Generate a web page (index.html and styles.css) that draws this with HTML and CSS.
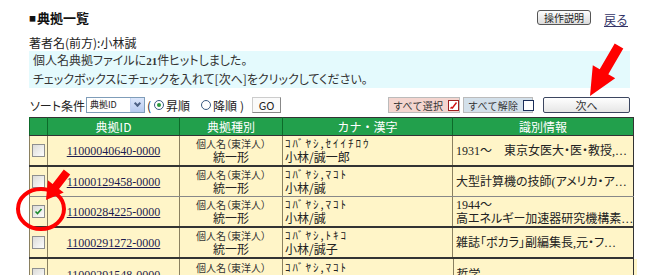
FILE: index.html
```html
<!DOCTYPE html>
<html lang="ja">
<head>
    <meta charset="UTF-8">
    <title>典拠一覧</title>
    <link rel="stylesheet" href="styles.css">
</head>
<body>
    <div class="page">
        <!-- Title bar -->
        <div class="top">
            <h1 class="title"><span class="sq">■</span>典拠一覧</h1>
            <div class="top-links">
                <button class="btn-help">操作説明</button>
                <a href="#" class="back">戻る</a>
            </div>
        </div>

        <p class="author">著者名(前方):小林誠</p>

        <div class="message">
            個人名典拠ファイルに<b class="num">21</b>件ヒットしました。<br>
            チェックボックスにチェックを入れて[次へ]をクリックしてください。
        </div>

        <!-- Sort + actions -->
        <div class="toolbar">
            <div class="sort">
                <span class="lbl">ソート条件</span>
                <span class="select"><span class="select-text">典拠ID</span><span class="select-btn"></span></span>
                <span class="paren">(</span>
                <span class="radio on"></span><span class="rlbl">昇順</span>
                <span class="radio"></span><span class="rlbl">降順</span>
                <span class="paren">)</span>
                <button class="btn-go">GO</button>
            </div>
            <div class="actions">
                <button class="btn-all">すべて選択<span class="box red"><svg width="9" height="9" viewBox="0 0 9 9"><path d="M1.5 7.5 L3 6 M3 7.5 L7.5 1.5" stroke="#d01010" stroke-width="1.4" fill="none"/></svg></span></button>
                <button class="btn-none">すべて解除<span class="box blue"></span></button>
                <button class="btn-next">次へ</button>
            </div>
        </div>

        <!-- Result table -->
        <table class="results">
            <thead>
                <tr>
                    <th class="c-chk"></th>
                    <th class="c-id">典拠ID</th>
                    <th class="c-type">典拠種別</th>
                    <th class="c-name">カナ・漢字</th>
                    <th class="c-info">識別情報</th>
                </tr>
            </thead>
            <tbody>
                <tr>
                    <td class="c-chk"><span class="chk"></span></td>
                    <td class="c-id"><a href="#">11000040640-0000</a></td>
                    <td class="c-type"><span class="small">個人名（東洋人）</span><span>統一形</span></td>
                    <td class="c-name"><span class="kana">ｺﾊﾞﾔｼ,ｾｲｲﾁﾛｳ</span><span>小林/誠一郎</span></td>
                    <td class="c-info">1931～　東京女医大・医・教授,…</td>
                </tr>
                <tr class="soft">
                    <td class="c-chk"><span class="chk"></span></td>
                    <td class="c-id"><a href="#">11000129458-0000</a></td>
                    <td class="c-type"><span class="small">個人名（東洋人）</span><span>統一形</span></td>
                    <td class="c-name"><span class="kana">ｺﾊﾞﾔｼ,ﾏｺﾄ</span><span>小林/誠</span></td>
                    <td class="c-info">大型計算機の技師(アメリカ・ア…</td>
                </tr>
                <tr>
                    <td class="c-chk"><span class="chk checked"><svg width="9" height="9" viewBox="0 0 9 9"><path d="M1.5 4.5 L3.5 6.5 L7.5 2" stroke="#1c8a2c" stroke-width="1.6" fill="none"/></svg></span></td>
                    <td class="c-id"><a href="#">11000284225-0000</a></td>
                    <td class="c-type"><span class="small">個人名（東洋人）</span><span>統一形</span></td>
                    <td class="c-name"><span class="kana">ｺﾊﾞﾔｼ,ﾏｺﾄ</span><span>小林/誠</span></td>
                    <td class="c-info">1944～<br>高エネルギー加速器研究機構素…</td>
                </tr>
                <tr>
                    <td class="c-chk"><span class="chk"></span></td>
                    <td class="c-id"><a href="#">11000291272-0000</a></td>
                    <td class="c-type"><span class="small">個人名（東洋人）</span><span>統一形</span></td>
                    <td class="c-name"><span class="kana">ｺﾊﾞﾔｼ,ﾄｷｺ</span><span>小林/誠子</span></td>
                    <td class="c-info">雑誌「ポカラ」副編集長,元・フ…</td>
                </tr>
                <tr>
                    <td class="c-chk"><span class="chk"></span></td>
                    <td class="c-id"><a href="#">11000291548-0000</a></td>
                    <td class="c-type"><span class="small">個人名（東洋人）</span><span>統一形</span></td>
                    <td class="c-name"><span class="kana">ｺﾊﾞﾔｼ,ﾏｺﾄ</span><span>小林/誠</span></td>
                    <td class="c-info top">哲学</td>
                </tr>
            </tbody>
        </table>
    </div>

    <!-- Red annotation marks drawn over the page -->
    <svg class="marks" width="650" height="275" viewBox="0 0 650 275">
        <polygon points="614.7,43.5 623.3,48.5 608.3,74.3 615.2,78.3 590,96 592.8,65.3 599.7,69.3" fill="#ff0000"/>
        <ellipse cx="41" cy="209" rx="23" ry="20" fill="none" stroke="#ff0000" stroke-width="4"/>
        <polygon points="63.8,169.5 70.2,174.5 59,188.9 63.7,192.5 46,200 47.9,180.3 52.6,183.9" fill="#ff0000"/>
    </svg>
</body>
</html>
```

FILE: styles.css
```css
/* General */
body {
    margin: 0;
    font-family: "Noto Sans CJK JP", sans-serif;
    font-size: 12px;
    color: #222;
    background: #fff;
    overflow: hidden;
    height: 275px;
}

.page {
    width: 604px;
    padding: 10px 0 0 29px;
}

button {
    font-family: "Noto Sans CJK JP", sans-serif;
    cursor: pointer;
    white-space: nowrap;
}

/* Title bar */
.top {
    display: flex;
    justify-content: space-between;
    align-items: center;
    height: 15px;
}

.title {
    margin: 0;
    font-size: 13px;
    font-weight: bold;
    line-height: 15px;
    color: #111;
}

.title .sq {
    font-size: 7px;
    vertical-align: 2px;
    margin-right: 1px;
}

.top-links {
    display: flex;
    align-items: center;
    gap: 13px;
    padding-right: 5px;
}

.btn-help {
    width: 54px;
    height: 15px;
    padding: 0;
    font-size: 10px;
    line-height: 11px;
    border: 1px solid #555;
    border-radius: 3px;
    background: linear-gradient(#fdfdfd, #dcdcdc);
    color: #222;
}

.back {
    font-size: 12px;
    color: #333366;
    margin-top: 4px;
}

/* Author + message */
.author {
    margin: 11px 0 0;
    line-height: 14px;
    font-size: 12px;
    font-feature-settings: "palt";
}

.message {
    width: 597px;
    margin-top: 1px;
    padding: 0 0 0 4px;
    line-height: 18px;
    background: #e4fafd;
    color: #333;
    font-feature-settings: "palt";
}

.message .num {
    font-family: "Liberation Serif", serif;
    font-weight: bold;
    font-size: 11px;
}

/* Toolbar */
.toolbar {
    width: 601px;
    margin-top: 9px;
    display: flex;
    justify-content: space-between;
    align-items: center;
    height: 16px;
}

.sort {
    display: flex;
    align-items: center;
    font-feature-settings: "palt";
}

.sort .lbl {
    margin-left: 1px;
    margin-right: 1px;
}

.select {
    display: flex;
    width: 57px;
    height: 14px;
    border: 1px solid #7f9db9;
    background: #fff;
}

.select-text {
    flex: 1;
    font-size: 9px;
    line-height: 14px;
    padding-left: 3px;
}

.select-btn {
    width: 13px;
    background: linear-gradient(#dbe6fb, #b7caf0);
    border-left: 1px solid #c2d2f2;
    position: relative;
}

.select-btn::after {
    content: "";
    position: absolute;
    left: 4px;
    top: 3px;
    width: 3px;
    height: 3px;
    border-right: 2px solid #4d6185;
    border-bottom: 2px solid #4d6185;
    transform: rotate(45deg);
}

.paren {
    margin: 0 3px 0 2px;
}

.radio {
    width: 8px;
    height: 8px;
    border: 1px solid #3a5a80;
    border-radius: 50%;
    background: #fff;
    position: relative;
    margin-right: 2px;
}

.radio.on::after {
    content: "";
    position: absolute;
    left: 2px;
    top: 2px;
    width: 4px;
    height: 4px;
    border-radius: 50%;
    background: #2a9a3a;
}

.rlbl {
    margin-right: 11px;
}

.rlbl + .paren {
    margin-left: -8px;
}

.btn-go {
    width: 29px;
    height: 16px;
    margin-left: 5px;
    padding: 0;
    font-size: 11px;
    line-height: 12px;
    border: 1px solid #888;
    border-top-color: #ccc;
    border-left-color: #ccc;
    background: #fafafa;
    color: #222;
}

.actions {
    display: flex;
    align-items: center;
}

.btn-all, .btn-none {
    height: 16px;
    padding: 0 0 0 4px;
    display: flex;
    align-items: center;
    gap: 5px;
    font-size: 10px;
    letter-spacing: 0.3px;
    border: 1px solid #bbb;
    color: #333;
}

.btn-all {
    width: 72px;
    background: #f4d5cf;
}

.btn-none {
    width: 70px;
    margin-left: 3px;
    background: #d3e0ea;
}

.box {
    flex-shrink: 0;
    width: 9px;
    height: 9px;
    background: #fff;
    display: inline-block;
}

.box.red {
    border: 1px solid #a02020;
}

.box.blue {
    border: 1px solid #1c2e5a;
}

.box svg {
    display: block;
}

.btn-next {
    width: 87px;
    height: 16px;
    margin-left: 10px;
    padding: 0;
    font-size: 11px;
    line-height: 12px;
    border: 1px solid #3c4660;
    border-radius: 2px;
    background: linear-gradient(#fefefe, #e6e6e6);
    color: #333;
}

/* Results table */
.results {
    width: 604px;
    margin-top: 4px;
    border-collapse: collapse;
    border: 1px solid #333;
    table-layout: fixed;
}

.results th {
    height: 17px;
    padding: 0;
    background: #22a04c;
    color: #fff;
    font-weight: normal;
    font-size: 12px;
    border-left: 1px solid #0d6a2a;
    border-bottom: 1px solid #333;
    line-height: 17px;
}

.results td {
    height: 29px;
    padding: 0;
    background: #fff5c8;
    border-left: 1px solid #8a8060;
    border-bottom: 2px solid #333;
    vertical-align: middle;
    line-height: 13px;
}

.results tr.soft td {
    border-bottom: 1px solid #888;
}

.results .c-chk { width: 17px; text-align: center; }
.results .c-id { width: 131px; text-align: center; }
.results .c-type { width: 102px; text-align: center; }
.results .c-name { width: 169px; }
.results .c-info { width: 180px; }

td.c-id a {
    font-family: "Liberation Serif", serif;
    font-size: 12px;
    color: #1c1c50;
}

td.c-type span, td.c-name span {
    display: block;
}

td.c-type span {
    font-size: 12px;
    line-height: 14px;
}

td.c-type span.small {
    font-size: 10px;
    line-height: 13px;
    color: #333;
    font-feature-settings: "palt";
}

td.c-name {
    padding-left: 2px;
}

td.c-name span {
    font-size: 12px;
    line-height: 14px;
}

td.c-name span.kana {
    font-size: 11px;
    line-height: 13px;
    letter-spacing: 2px;
    font-kerning: none;
    font-feature-settings: "kern" 0, "palt" 0, "halt" 0;
    text-rendering: optimizeSpeed;
}

td.c-info {
    padding-left: 3px;
    font-family: "Liberation Serif", "Noto Sans CJK JP", serif;
    font-size: 12px;
    line-height: 14px;
    white-space: nowrap;
    font-feature-settings: "palt";
}

td.c-info.top {
    vertical-align: top;
    padding-top: 1px;
}

.chk {
    display: block;
    width: 11px;
    height: 11px;
    margin: 0 auto;
    border: 1px solid #8e8f8f;
    background: linear-gradient(135deg, #dcdcd8, #fdfdfd);
}

.chk svg {
    display: block;
    margin: 1px;
}

/* Annotation overlay */
.marks {
    position: absolute;
    left: 0;
    top: 0;
    pointer-events: none;
}
```
